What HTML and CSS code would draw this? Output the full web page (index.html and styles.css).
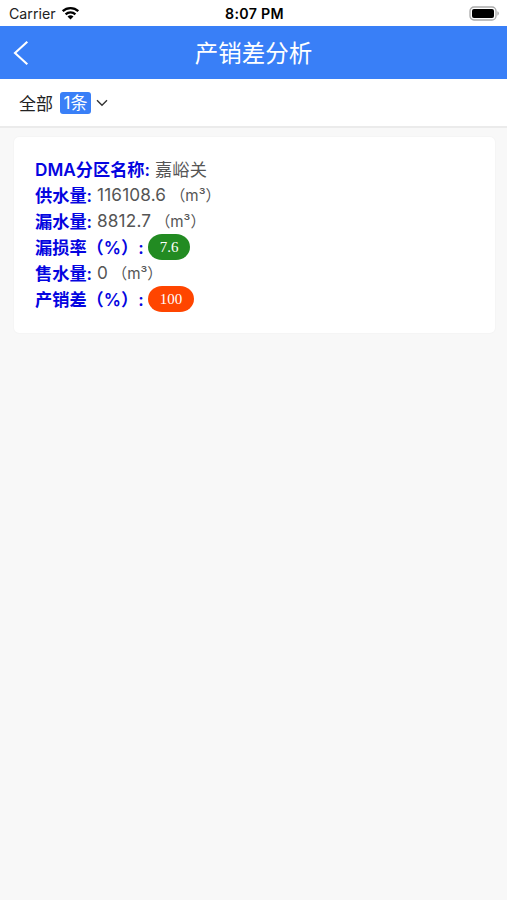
FILE: index.html
```html
<!DOCTYPE html>
<html lang="zh-CN">
<head>
    <meta charset="UTF-8">
    <meta name="viewport" content="width=device-width, initial-scale=1.0">
    <title>产销差分析</title>
    <link rel="stylesheet" href="styles.css">
</head>
<body>

<div class="status-bar">
    <div class="carrier">
        <span>Carrier</span>
        <svg class="wifi" width="19" height="14" viewBox="0 0 18 14">
            <path d="M1.2 5.2a11.3 11.3 0 0 1 15.6 0M4.1 8.3a7.1 7.1 0 0 1 9.8 0" fill="none" stroke="#000" stroke-width="2.3"/>
            <path d="M9 13.6L6 10.6a4.3 4.3 0 0 1 6 0z"/>
        </svg>
    </div>
    <div class="time">8:07 PM</div>
    <svg class="battery" width="31" height="15" viewBox="0 0 31 15">
        <rect x="1" y="1" width="26" height="13" rx="4" fill="#fff" stroke="#aaa" stroke-width="1.3"/>
        <rect x="3" y="3" width="22" height="9" rx="2"/>
        <path d="M28.4 5.3a2.4 2.4 0 0 1 0 4.4z" fill="#aaa"/>
    </svg>
</div>

<header class="nav-bar">
    <svg class="back" width="16" height="26" viewBox="0 0 16 26">
        <path d="M14.3 1.7L2 13l12.3 11.3" fill="none" stroke="#fff" stroke-width="2.1"/>
    </svg>
    <h1>产销差分析</h1>
</header>

<div class="filter">
    <span>全部</span>
    <span class="count">1条</span>
    <svg width="12" height="8" viewBox="0 0 12 8">
        <path d="M1 1.2l5 5 5-5" fill="none" stroke="#333" stroke-width="1.4"/>
    </svg>
</div>

<div class="card">
    <div class="row"><b>DMA分区名称:</b><span>嘉峪关</span></div>
    <div class="row"><b>供水量:</b><span>116108.6<span class="unit">（m³）</span></span></div>
    <div class="row"><b>漏水量:</b><span>8812.7<span class="unit">（m³）</span></span></div>
    <div class="row"><b>漏损率（%）:</b><span class="tag green">7.6</span></div>
    <div class="row"><b>售水量:</b><span>0<span class="unit">（m³）</span></span></div>
    <div class="row"><b>产销差（%）:</b><span class="tag red">100</span></div>
</div>

</body>
</html>
```

FILE: styles.css
```css
* {
    box-sizing: border-box;
}

body {
    margin: 0;
    min-height: 100vh;
    background-color: #f8f8f8;
    font-family: Inter, "Noto Sans CJK SC", sans-serif;
    color: #222;
}

.status-bar {
    display: grid;
    grid-template-columns: 1fr auto 1fr;
    align-items: center;
    height: 26px;
    padding: 0 7px 0 9px;
    background-color: #fff;
    color: #000;
    font-size: 14.2px;
}

.carrier {
    display: flex;
    align-items: center;
    gap: 5px;
    color: #222;
}

.time {
    font-weight: 600;
    letter-spacing: 0.3px;
}

.battery {
    justify-self: end;
}

.nav-bar {
    display: grid;
    grid-template-columns: 1fr auto 1fr;
    align-items: center;
    height: 53px;
    padding: 0 13px;
    background-color: #397ff7;
    color: #fff;
}

.nav-bar h1 {
    margin: 0;
    padding-bottom: 2px;
    font-size: 23.5px;
    font-weight: 400;
}

.filter {
    display: flex;
    align-items: center;
    height: 49px;
    padding-left: 19px;
    background-color: #fff;
    border-bottom: 2px solid #ebebeb;
    font-size: 17px;
}

.count {
    margin: 0 5px 0 7px;
    width: 31px;
    height: 22px;
    line-height: 22px;
    border-radius: 3px;
    background-color: #397ff7;
    color: #fff;
    text-align: center;
    font-size: 17px;
}

.card {
    height: 196px;
    margin: 9px 12px 0 14px;
    padding: 19px 21px;
    border-radius: 5px;
    background-color: #fff;
    box-shadow: 0 0 2px rgba(0, 0, 0, 0.06);
}

.row {
    display: flex;
    align-items: center;
    gap: 5px;
    height: 26px;
    padding-bottom: 2px;
    white-space: nowrap;
    font-size: 17.2px;
    color: #555;
}

.row b {
    color: #0505e0;
    font-weight: 600;
}

.row b + span:not(.tag) {
    letter-spacing: 0.15px;
}

.unit {
    margin-left: 4px;
    font-size: 15.2px;
    letter-spacing: 0;
}

.tag {
    height: 26px;
    line-height: 26px;
    margin: 2px 0 0 -1px;
    padding: 0 12px;
    border-radius: 14px / 13px;
    color: #fff;
    font-family: "Liberation Serif", serif;
    font-size: 15px;
}

.green {
    background-color: #228b22;
}

.red {
    background-color: #ff4500;
}
```
